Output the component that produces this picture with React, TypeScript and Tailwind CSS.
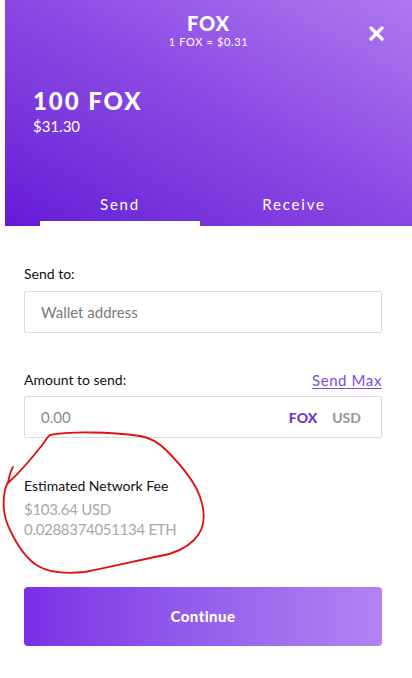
import React from 'react';

const font = { fontFamily: 'Lato, "Open Sans", Arial, sans-serif' };

function CloseIcon() {
  return (
    <svg width="15" height="15" viewBox="0 0 15 15" fill="none">
      <path d="M2 2L13 13M13 2L2 13" stroke="white" strokeWidth="3.2" strokeLinecap="round" />
    </svg>
  );
}

// hand-drawn red annotation over the fee block
function Scribble() {
  return (
    <svg
      className="absolute left-0 top-0 pointer-events-none"
      width="412"
      height="678"
      viewBox="0 0 412 678"
      fill="none"
    >
      <path
        d="M13 467 C10 472 9 477 8 483 C18 474 32 458 43 444 C46 440 47 437 50 435 C70 431 110 432 140 436 C152 438 160 444 166 450 C180 464 196 482 201 500 C206 516 204 530 194 540 C184 550 172 554 160 556 C140 560 115 566 85 572 C65 574 48 572 38 566 C28 560 18 547 10 530 C4 518 2 505 5 490 C6 486 7 484 8 482"
        stroke="#e10f0f"
        strokeWidth="1.8"
        strokeLinecap="round"
        strokeLinejoin="round"
      />
    </svg>
  );
}

export default function App() {
  return (
    <div className="relative w-[412px] h-[678px] overflow-hidden bg-white" style={font}>
      <div className="ml-[5px] h-[226px] flex flex-col text-white bg-gradient-to-tr from-[#6618d6] via-[#8a47e3] to-[#ad78ef]">
        <div className="relative pt-[11px] text-center">
          <div className="text-[20px] leading-6 font-black tracking-[0.04em]">FOX</div>
          <div className="text-[11px] leading-[14px] tracking-[0.06em]">1 FOX = $0.31</div>
          <button className="absolute right-[28px] top-[26px]">
            <CloseIcon />
          </button>
        </div>
        <div className="mt-[38px] pl-[28px]">
          <div className="text-[24px] leading-7 font-black tracking-[0.08em]">100 FOX</div>
          <div className="mt-[2px] text-[15px] leading-[18px]">$31.30</div>
        </div>
        <div className="mt-auto flex gap-[14px] pl-[35px]">
          <div className="w-[160px] flex flex-col items-center">
            <span className="text-[15px] leading-[18px] tracking-[0.12em]">Send</span>
            <span className="mt-[8px] h-[5px] w-full bg-white" />
          </div>
          <div className="w-[160px] flex flex-col items-center">
            <span className="text-[15px] leading-[18px] tracking-[0.12em]">Receive</span>
            <span className="mt-[8px] h-[5px] w-full" />
          </div>
        </div>
      </div>

      <div className="pl-6 pr-[30px] text-[#111]">
        <div className="mt-[38px] text-[14px] leading-5">Send to:</div>
        <div className="mt-[7px] h-[42px] flex items-center border border-[#dcdcdc] rounded-[2px] px-4 text-[15px] text-[#7a7a7a]">
          Wallet address
        </div>

        <div className="mt-[37px] flex items-center justify-between">
          <span className="text-[14px] leading-5">Amount to send:</span>
          <span className="text-[15px] leading-5 text-[#7d4ce3] underline underline-offset-2 tracking-[0.04em]">Send Max</span>
        </div>
        <div className="mt-[6px] h-[42px] flex items-center border border-[#dcdcdc] rounded-[2px] pl-4 pr-5 text-[15px]">
          <span className="text-[#8a8a8a] flex-1">0.00</span>
          <span className="font-black text-[14px] text-[#6d34d8]">FOX</span>
          <span className="ml-[15px] font-black text-[14px] text-[#9b9b9b]">USD</span>
        </div>

        <div className="mt-[38px] text-[14px] leading-5">Estimated Network Fee</div>
        <div className="mt-[3px] text-[15px] leading-5 text-[#a8a8a8] tracking-[-0.02em]">$103.64 USD</div>
        <div className="text-[15px] leading-5 text-[#a8a8a8] tracking-[-0.02em]">0.0288374051134 ETH</div>

        <button className="mt-[48px] w-full h-[59px] rounded-[4px] bg-gradient-to-r from-[#7a2fe6] to-[#b283f1] text-white text-[15px] font-black tracking-[0.03em]">
          Continue
        </button>
      </div>

      <Scribble />
    </div>
  );
}
